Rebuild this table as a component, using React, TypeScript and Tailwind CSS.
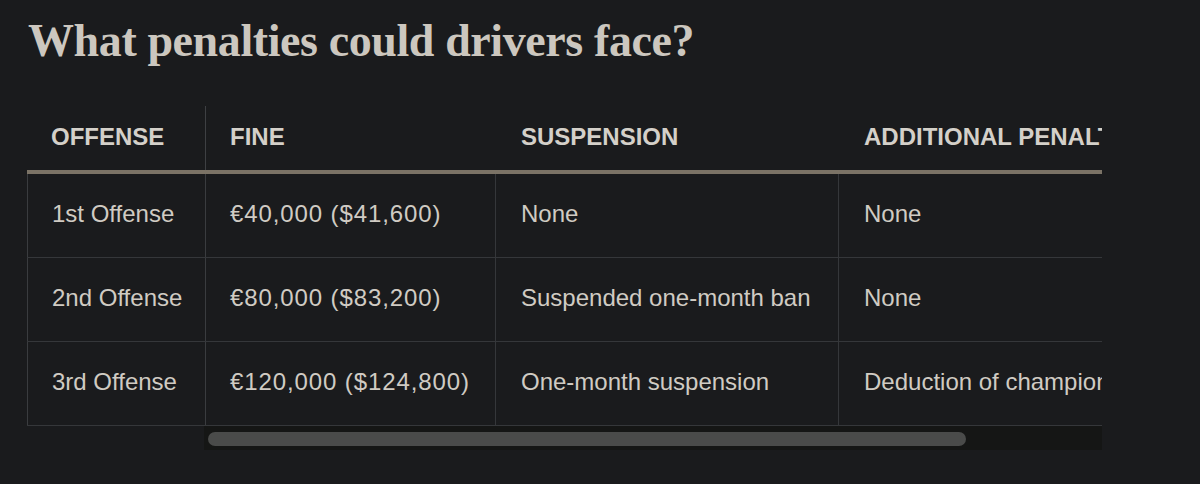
import React from "react";

const rows = [
  ["1st Offense", "€40,000 ($41,600)", "None", "None"],
  ["2nd Offense", "€80,000 ($83,200)", "Suspended one-month ban", "None"],
  ["3rd Offense", "€120,000 ($124,800)", "One-month suspension", "Deduction of championship points"],
];

export default function App() {
  return (
    <div className="min-h-[484px] w-[1200px] bg-[#1a1b1d] text-[#d0cbc3] [font-family:'Liberation_Sans',Arial,sans-serif] overflow-hidden">
      <h2 className="pl-[28px] pt-[18px] text-[46px] leading-[46px] font-bold text-[#ccc7bf] [font-family:'Liberation_Serif','Times_New_Roman',serif] whitespace-nowrap tracking-[-0.4px]">
        What penalties could drivers face?
      </h2>
      <div className="mt-[42px] ml-[27px] w-[1075px] overflow-hidden">
        <div className="flex h-[68px] w-[1300px] border-b-4 border-[#7b7366] text-[24px] font-bold text-[#d4d0c9]">
          <div className="flex w-[179px] shrink-0 items-center border-r border-[#3e4043] pl-6 pb-[3px]">OFFENSE</div>
          <div className="flex w-[290px] shrink-0 items-center pl-6 pb-[3px]">FINE</div>
          <div className="flex w-[343px] shrink-0 items-center pl-[25px] pb-[3px]">SUSPENSION</div>
          <div className="flex w-[460px] shrink-0 items-center pl-[25px] pb-[3px] whitespace-nowrap">ADDITIONAL PENALTIES</div>
        </div>
        {rows.map((r, i) => (
          <div key={i} className="flex h-[84px] w-[1300px] border-b border-[#35373a] text-[24px]">
            <div className="flex w-[179px] shrink-0 items-center border-l border-r border-[#3a3c3f] pl-6 pb-[3px] whitespace-nowrap">{r[0]}</div>
            <div className="flex w-[290px] shrink-0 items-center border-r border-[#35373a] pl-6 pb-[3px] whitespace-nowrap tracking-[0.9px]">{r[1]}</div>
            <div className="flex w-[343px] shrink-0 items-center border-r border-[#35373a] pl-[25px] pb-[3px] whitespace-nowrap">{r[2]}</div>
            <div className="flex w-[460px] shrink-0 items-center pl-[25px] pb-[3px] whitespace-nowrap">{r[3]}</div>
          </div>
        ))}
      </div>
      <div className="ml-[204px] h-[24px] w-[898px] bg-[#151615] pl-[4px] pt-[6px]">
        <div className="h-[14px] w-[758px] rounded-full bg-[#4a4b4a]" />
      </div>
    </div>
  );
}
